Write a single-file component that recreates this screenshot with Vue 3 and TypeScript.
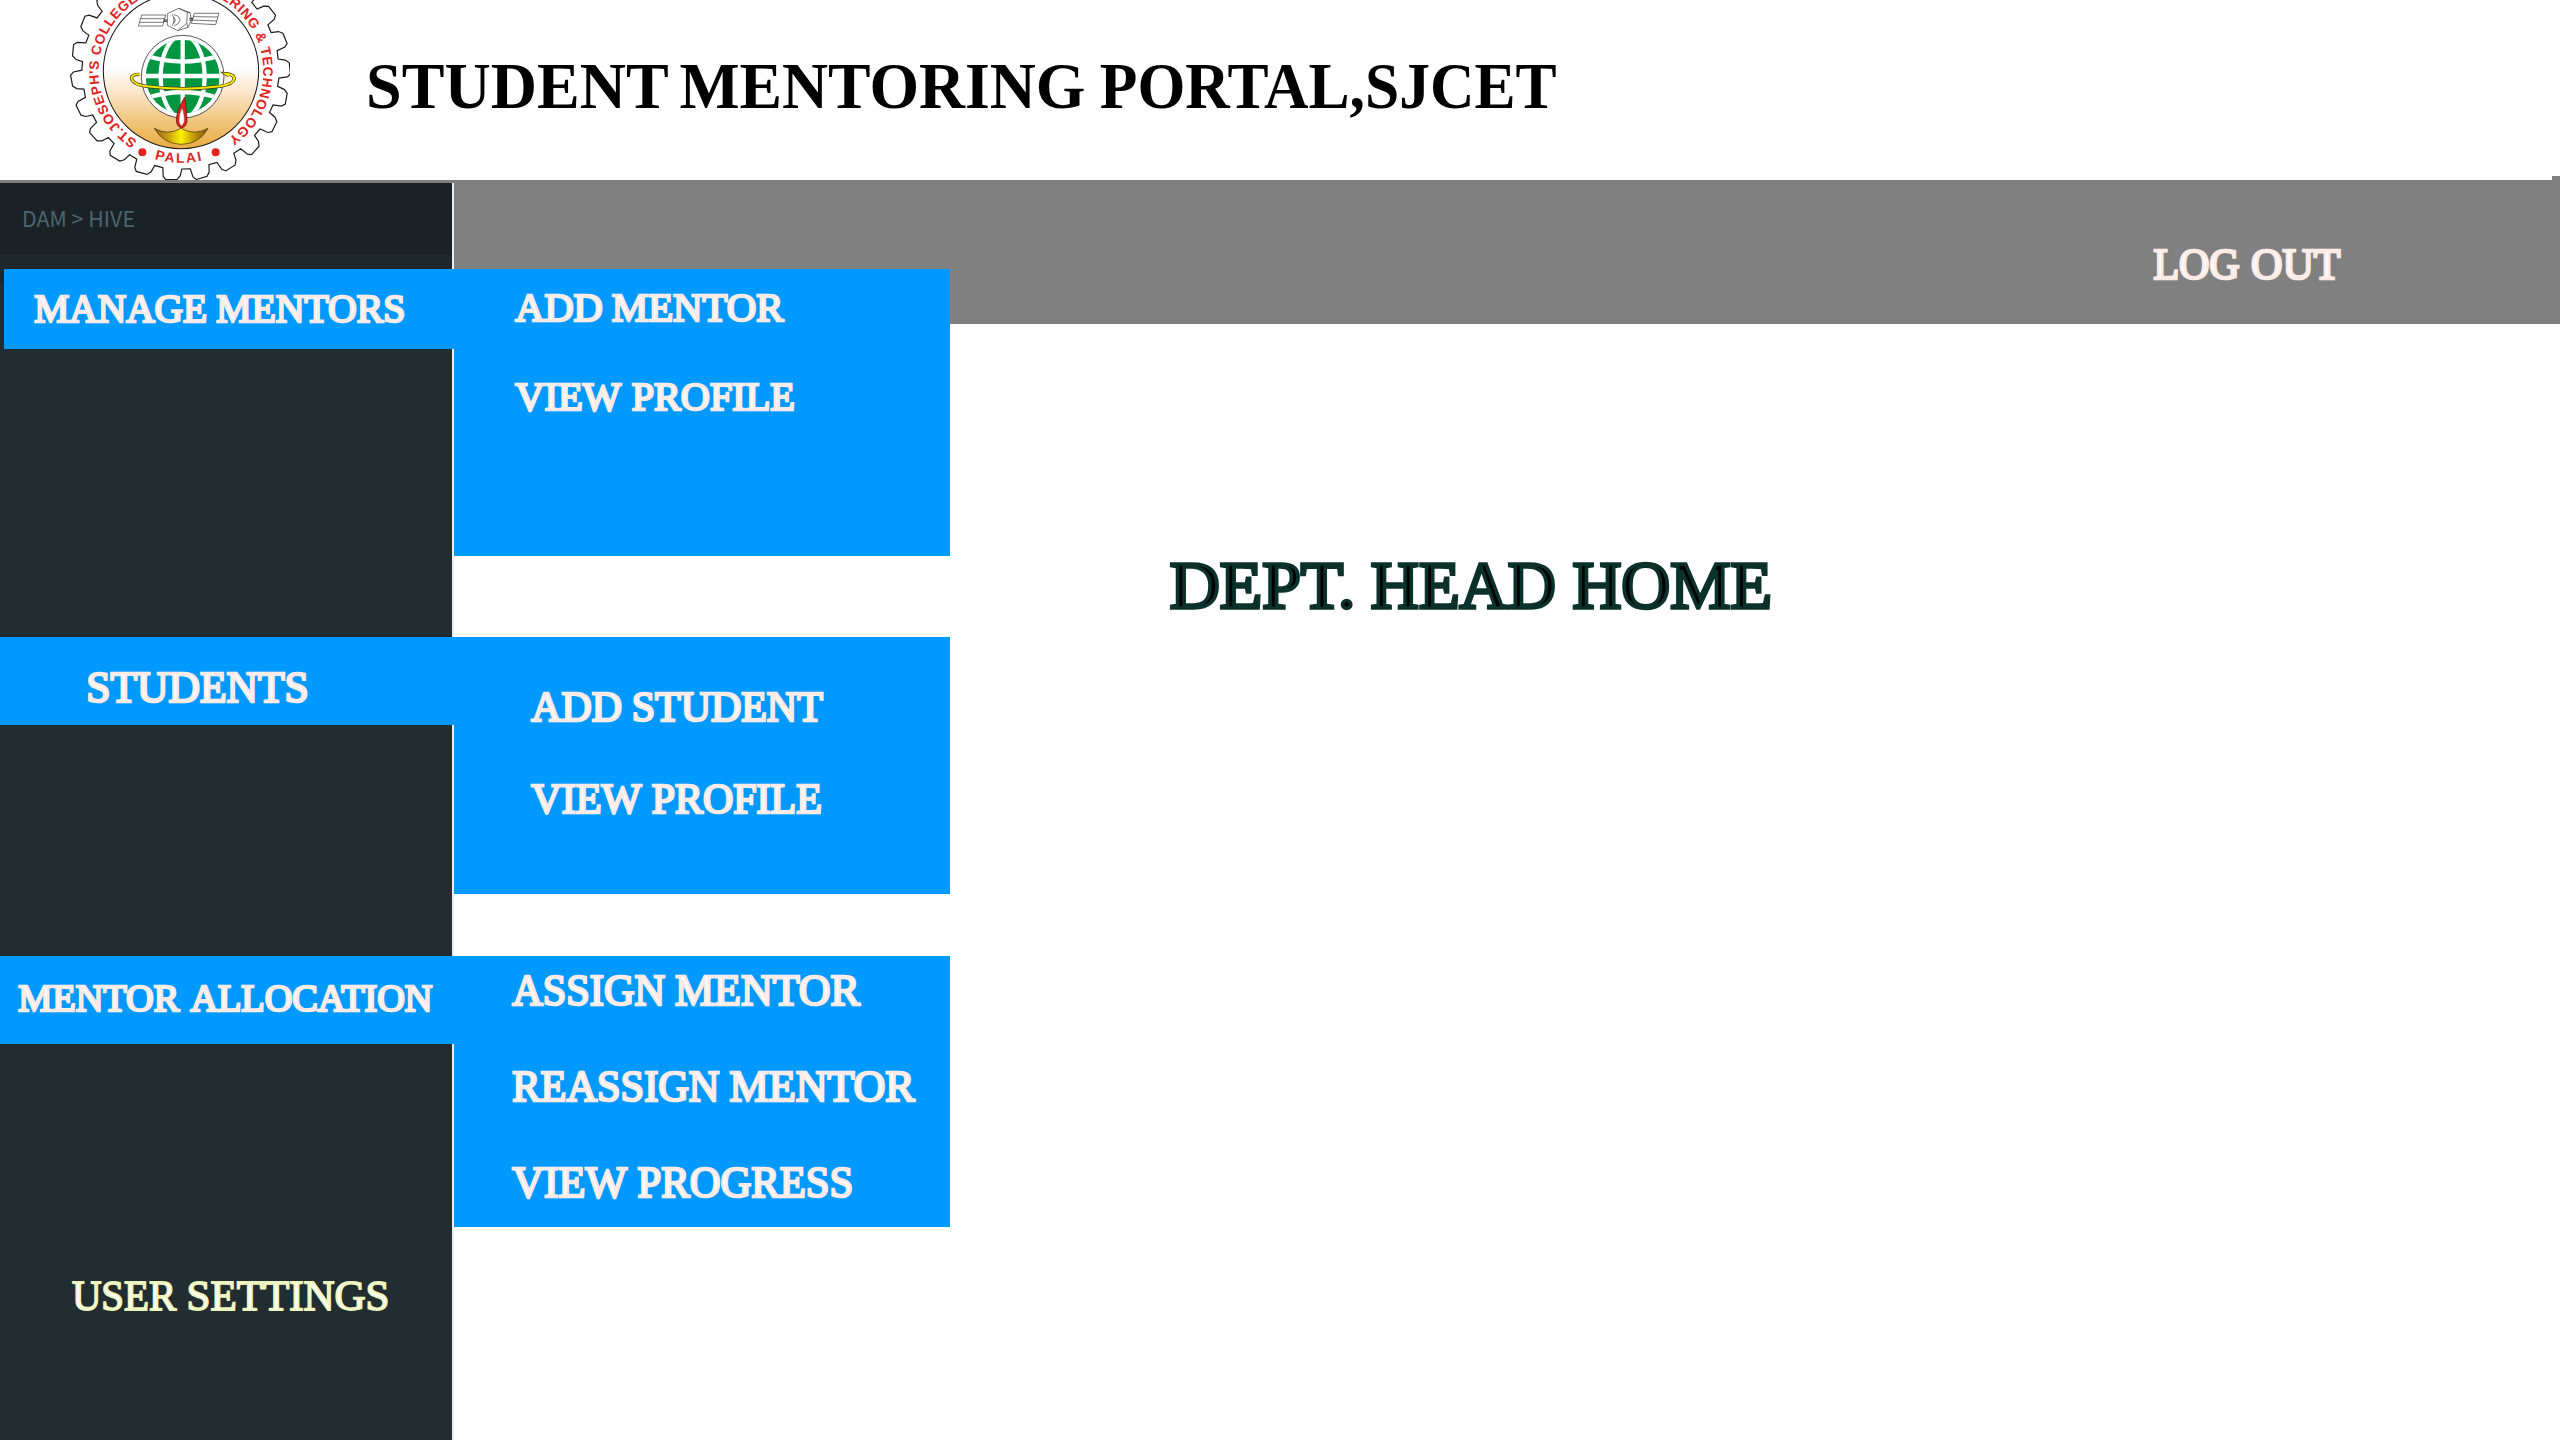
<script setup lang="ts">
import { defineComponent, h } from 'vue'

type Word = [text: string, left: number, right: number]

const SERIF = '"Liberation Serif", "Times New Roman", serif'
const CAP_HEIGHT = 0.655
const ctx = document.createElement('canvas').getContext('2d')!

// One line of display lettering: every word is fitted to its left and right ink edges.
const Lettering = defineComponent({
  props: {
    words: { type: Array as () => Word[], required: true },
    height: { type: Number, required: true },
    outline: { type: Number, default: 0 },
    weight: { type: Number, default: 400 },
  },
  setup(props) {
    return () => {
      const origin = props.words[0][1]
      const end = props.words[props.words.length - 1][2]
      const size = (props.height - props.outline) / CAP_HEIGHT
      ctx.font = `${props.weight} ${size}px ${SERIF}`
      const spans = props.words.flatMap(([text, left, right], i) => {
        const m = ctx.measureText(text)
        const ink = m.actualBoundingBoxRight + m.actualBoundingBoxLeft
        const k = (right - left - props.outline) / ink
        const span = h(
          'tspan',
          {
            x: left - origin + props.outline / 2 + k * m.actualBoundingBoxLeft,
            textLength: m.width * k,
            lengthAdjust: 'spacingAndGlyphs',
          },
          text,
        )
        return i ? [' ', span] : [span]
      })
      return h(
        'svg',
        { width: end - origin, height: props.height, class: 'lettering' },
        [
          h(
            'text',
            {
              y: props.height - props.outline / 2,
              'font-size': size,
              'font-family': SERIF,
              'font-weight': props.weight,
              'stroke-width': props.outline,
            },
            spans,
          ),
        ],
      )
    }
  },
})

interface Line { words: Word[]; height: number; top: number }
interface Section { id: string; label: Line; links: Line[] }

// Word edges are measured from the left of the page, tops from the top of the block.
const sections: Section[] = [
  {
    id: 'mentors',
    label: { words: [['MANAGE', 34, 207], ['MENTORS', 216, 404.5]], height: 28.6, top: 26.2 },
    links: [
      { words: [['ADD', 514.2, 603], ['MENTOR', 611.8, 785]], height: 29, top: 24 },
      { words: [['VIEW', 513.6, 621.8], ['PROFILE', 631, 794]], height: 29, top: 60.2 },
    ],
  },
  {
    id: 'students',
    label: { words: [['STUDENTS', 86.6, 307.4]], height: 31, top: 34.6 },
    links: [
      { words: [['ADD', 530, 621.8], ['STUDENT', 632.5, 823.4]], height: 30, top: 54.6 },
      { words: [['VIEW', 529.5, 641.8], ['PROFILE', 651, 820.9]], height: 30, top: 62 },
    ],
  },
  {
    id: 'allocation',
    label: { words: [['MENTOR', 17.8, 181], ['ALLOCATION', 189, 433]], height: 27.4, top: 29.4 },
    links: [
      { words: [['ASSIGN', 511.2, 665.6], ['MENTOR', 674.9, 861.9]], height: 31.4, top: 18.6 },
      { words: [['REASSIGN', 511.7, 719.6], ['MENTOR', 729, 916.3]], height: 31.4, top: 64.6 },
      { words: [['VIEW', 511, 627.7], ['PROGRESS', 637.3, 852]], height: 31.4, top: 64.6 },
    ],
  },
]

const labelOffset = (s: Section) => s.label.words[0][1] - (s.id === 'mentors' ? 4 : 0)

// Gear rim of the college seal.
const gear = (() => {
  const cx = 391.5
  const cy = 212
  const at = (deg: number, r: number) => {
    const a = (deg * Math.PI) / 180
    return `${(cx - r * Math.sin(a)).toFixed(1)} ${(cy + r * Math.cos(a)).toFixed(1)}`
  }
  const tooth: [number, number][] = [
    [-5.9, 295], [-4.9, 316], [-3.2, 327], [2.6, 330], [4.2, 321], [5.2, 296],
  ]
  const pts: string[] = []
  for (let i = -10; i <= 10; i++) {
    for (const [d, r] of tooth) pts.push(at(5.1 + i * 16 + d, r))
  }
  return 'M' + pts.join(' L')
})()
</script>

<template>
  <div class="page">
    <header class="masthead">
      <svg class="seal" viewBox="0 0 720 540" width="240" height="180">
        <defs>
          <linearGradient id="glow" x1="0" y1="0" x2="0" y2="1">
            <stop offset="0.48" stop-color="#fff" />
            <stop offset="0.62" stop-color="#fae8cf" />
            <stop offset="0.82" stop-color="#f1c67f" />
            <stop offset="1" stop-color="#e8ab3e" />
          </linearGradient>
          <linearGradient id="brass">
            <stop offset="0" stop-color="#9a6a12" />
            <stop offset="0.25" stop-color="#c89a14" />
            <stop offset="0.5" stop-color="#fff200" />
            <stop offset="0.75" stop-color="#c0920f" />
            <stop offset="1" stop-color="#85570f" />
          </linearGradient>
          <clipPath id="globe"><circle cx="398" cy="230" r="111" /></clipPath>
          <path id="ring" d="M262.100 422.500A247 247 0 1 1 525.700 421.200" />
          <path id="foot" d="M200 409.300A275 275 0 0 0 590 405" />
        </defs>
        <path :d="gear" fill="#fff" stroke="#1c1c1c" stroke-width="3.600" />
        <circle cx="393" cy="213" r="233" fill="url(#glow)" stroke="#1c1c1c" stroke-width="3.200" />
        <g class="seal-text">
          <text font-size="41"><textPath href="#ring" textLength="1262" lengthAdjust="spacing">ST.JOSEPH'S COLLEGE OF ENGINEERING &amp; TECHNOLOGY</textPath></text>
          <text font-size="41"><textPath href="#foot" startOffset="133" textLength="144" lengthAdjust="spacing">PALAI</textPath></text>
          <circle cx="277" cy="457" r="12" />
          <circle cx="497" cy="457" r="12" />
        </g>
        <g fill="none" stroke="#333" stroke-width="2">
          <path d="M275 45H347L338 78H265ZM272 56H344M269 67H341" />
          <path d="M433 40H507L497 74L424 70ZM430 50L504 51M427 60L501 63" />
          <path d="M340 60H352M340 64H352M418 55H430M418 60H428" stroke-width="3" />
          <path d="M352 41L386 25L420 38L424 60L414 82L383 92L352 76ZM386 25L412 37L410 70L383 92M412 37L420 38M410 70L414 82" />
          <path d="M366 42Q378 60 366 78M372 44Q390 48 390 61Q388 72 372 78M372 52Q380 61 372 70" />
        </g>
        <circle cx="398" cy="230" r="124" fill="#fff" stroke="#333" stroke-width="2.500" />
        <g clip-path="url(#globe)">
          <rect x="287" y="119" width="222" height="222" fill="#009540" />
          <g fill="none" stroke="#fff" stroke-width="13">
            <path d="M398 110V350M280 228H520" />
            <ellipse cx="398" cy="230" rx="66" ry="124" />
            <path d="M285 166Q398 204 511 166M285 296Q398 256 511 296" />
          </g>
        </g>
        <path class="orbit-edge" d="M268 223C230 222 238 252 290 259Q400 273 510 259C566 250 562 222 526 221L536 228" />
        <path class="orbit" d="M268 223C230 222 238 252 290 259Q400 273 510 259C566 250 562 222 526 221L536 228" />
        <path d="M313 385Q354 408 393 385Q434 408 474 385Q448 433 393 433Q340 432 313 385Z" fill="url(#brass)" stroke="#44300b" stroke-width="2" />
        <path d="M404 291Q412 345 411 366Q407 383 394 384Q379 380 379 358Q380 330 404 291Z" fill="#dd211c" stroke="#5c1512" stroke-width="2" />
        <path d="M397 322Q405 350 403 366Q394 388 387 366Q385 345 397 322Z" fill="#fff" stroke="#8a1a16" stroke-width="1.500" />
      </svg>
      <Lettering
        class="title"
        :words="[['STUDENT', 369, 667.3], ['MENTORING', 680.4, 1084], ['PORTAL,SJCET', 1100.8, 1556.3]]"
        :height="42.500"
        :weight="700"
      />
      <i class="notch"></i>
    </header>

    <div class="body">
      <aside class="sidebar">
        <div class="crumbs">
          <svg width="112" height="16" class="lettering">
            <text x="-1" y="16" textLength="113" lengthAdjust="spacingAndGlyphs">DAM &gt; HIVE</text>
          </svg>
        </div>
        <nav class="menu">
          <section v-for="s in sections" :key="s.id" class="item" :class="s.id">
            <Lettering
              class="pale"
              :words="s.label.words"
              :height="s.label.height"
              :outline="2.5"
              :style="{ marginTop: s.label.top + 'px', marginLeft: labelOffset(s) + 'px' }"
            />
            <div class="submenu">
              <Lettering
                v-for="(l, i) in s.links"
                :key="i"
                class="pale"
                :words="l.words"
                :height="l.height"
                :outline="2.5"
                :style="{ marginTop: l.top + 'px', marginLeft: l.words[0][1] - 454 + 'px' }"
              />
            </div>
          </section>
        </nav>
        <Lettering class="settings" :words="[['USER', 71.3, 177.7], ['SETTINGS', 188, 388.7]]" :height="30" :outline="1.8" />
      </aside>

      <main class="content">
        <div class="toolbar">
          <Lettering class="pale" :words="[['LOG', 2153.3, 2240.7], ['OUT', 2251, 2342.3]]" :height="31.4" :outline="2.7" />
        </div>
        <Lettering
          class="heading"
          :words="[['DEPT.', 1169, 1353.3], ['HEAD', 1370, 1555], ['HOME', 1571.6, 1770.6]]"
          :height="47.700"
          :outline="3.6"
        />
      </main>
    </div>
  </div>
</template>

<style>
body {
  margin: 0;
  background: #fff;
}
</style>

<style scoped>
.page {
  width: 2560px;
  height: 1440px;
  overflow: hidden;
  display: flex;
  flex-direction: column;
  background: #fff;
}
.masthead {
  position: relative;
  flex: 0 0 180px;
  display: flex;
  align-items: flex-start;
  border-bottom: 3px solid #808080;
}
.seal {
  display: block;
  margin-left: 50px;
  flex: none;
}
.seal-text {
  fill: #df231d;
  font-family: 'Liberation Sans', Arial, sans-serif;
  font-weight: 700;
}
.orbit-edge,
.orbit {
  fill: none;
  stroke: #3d3a10;
  stroke-width: 10;
}
.orbit {
  stroke: #f5e400;
  stroke-width: 6;
}
.lettering {
  display: block;
  flex: none;
  overflow: visible;
}
.title {
  margin: 65px 0 0 79px;
  fill: #000;
}
.notch {
  position: absolute;
  right: 0;
  bottom: 0;
  width: 8px;
  height: 4px;
  background: #808080;
}
.body {
  flex: 1;
  display: flex;
  min-height: 0;
}
.sidebar {
  position: relative;
  z-index: 1;
  box-sizing: border-box;
  flex: none;
  width: 454px;
  border-right: 2px solid #ecedf3;
  background: #222d32;
}
.crumbs {
  height: 72px;
  box-sizing: border-box;
  padding: 28px 0 0 23px;
  background: #1b2226;
}
.crumbs text {
  font: 21.8px 'Noto Sans CJK SC', 'Noto Sans', sans-serif;
  fill: #4b646f;
}
.menu {
  padding-top: 14px;
  background: linear-gradient(#1f292d, #1e272b 28px, #222d32 28px);
}
.item {
  position: relative;
  display: flex;
  align-items: flex-start;
  width: 454px;
  height: 88px;
  background: #0099ff;
}
.mentors {
  width: 450px;
  height: 80px;
  margin: 0 0 288px 4px;
}
.students {
  margin-bottom: 231px;
}
.submenu {
  position: absolute;
  top: 0;
  left: 100%;
  width: 496px;
  background: #0099ff;
}
.mentors .submenu {
  height: 287px;
}
.students .submenu {
  height: 257px;
}
.allocation .submenu {
  height: 271px;
}
.pale {
  fill: #fff;
  stroke: #fcebe7;
}
.settings {
  margin: 237.4px 0 0 71.3px;
  fill: #fff;
  stroke: #eef4bd;
}
.content {
  flex: 1;
}
.toolbar {
  height: 141px;
  display: flex;
  align-items: flex-start;
  box-sizing: border-box;
  padding: 65.700px 0 0 1699.3px;
  background: #808080;
}
.heading {
  margin: 238.3px 0 0 715px;
  fill: #000;
  stroke: #0b312b;
}
</style>
